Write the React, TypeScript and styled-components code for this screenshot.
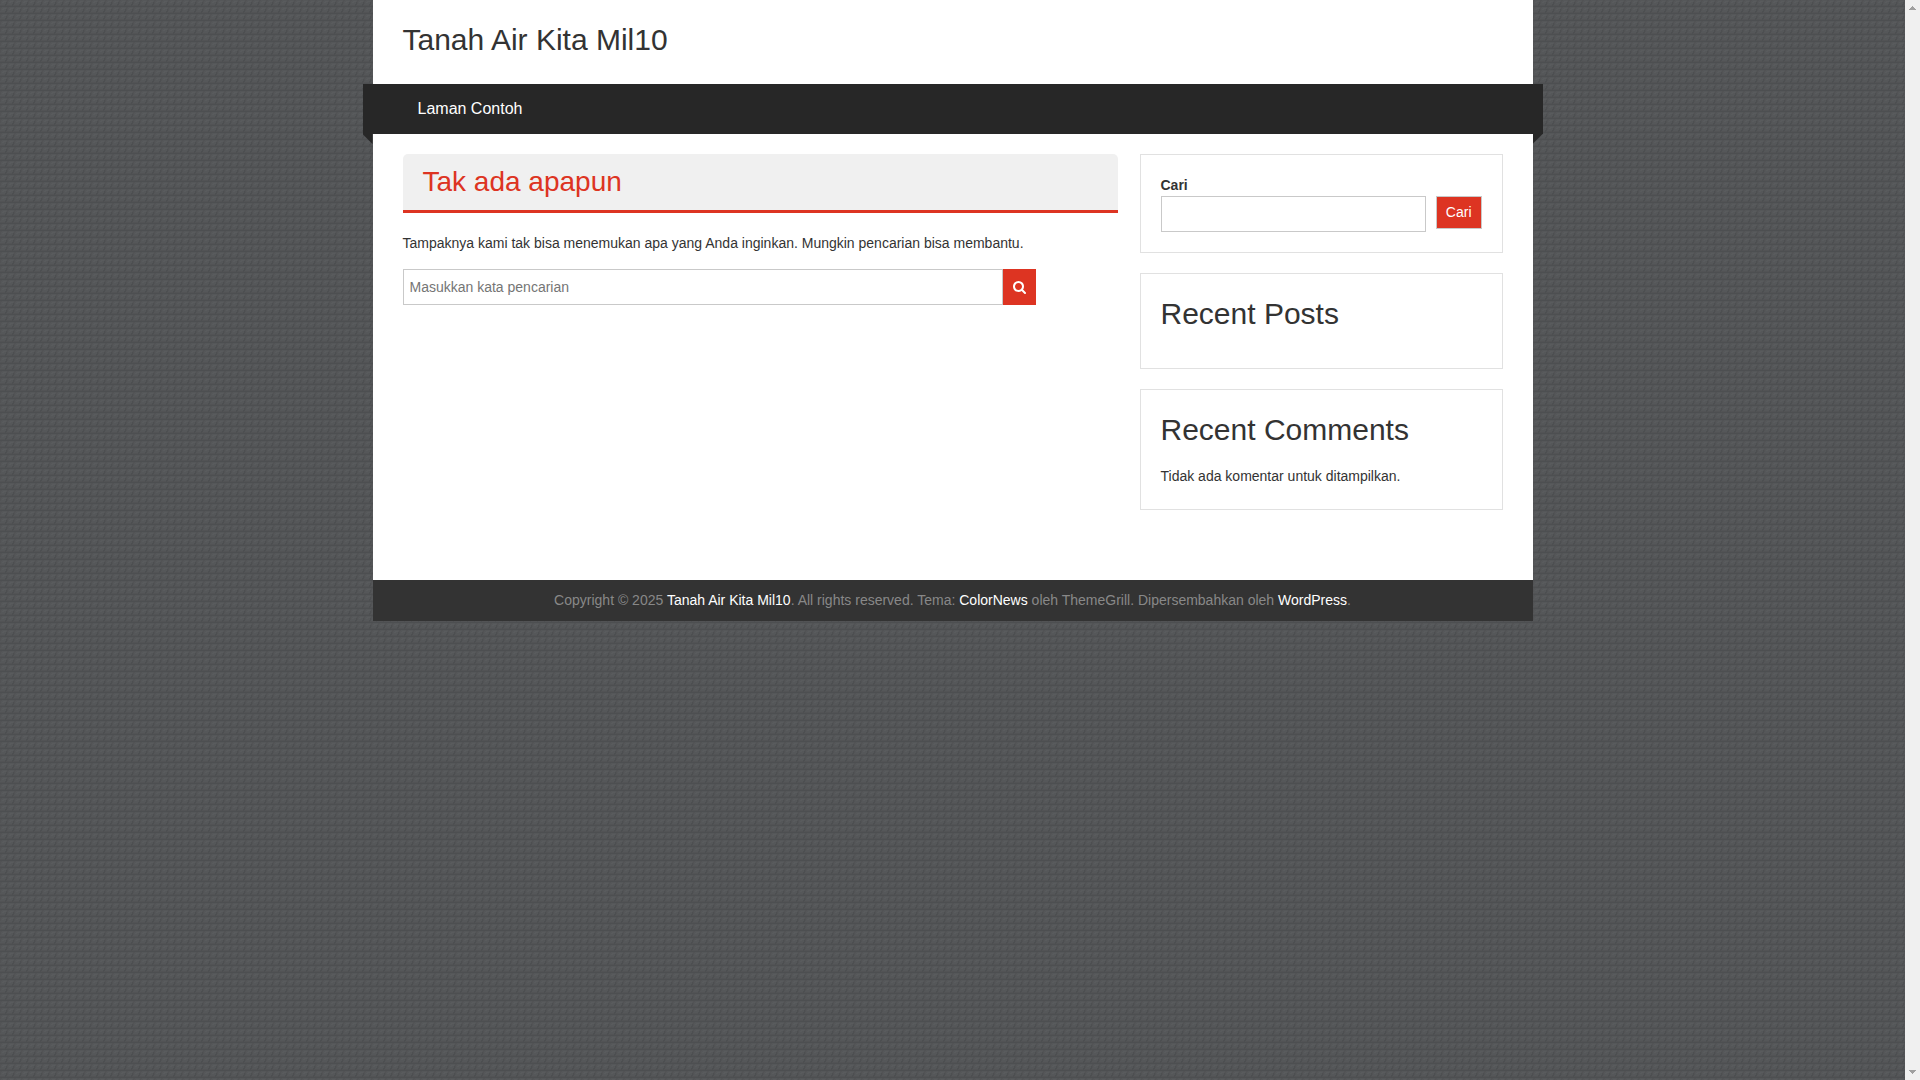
import React from "react";
import styled, { createGlobalStyle } from "styled-components";

const Global = createGlobalStyle`
  *, *::before, *::after { box-sizing: border-box; }
  html { scrollbar-width: none; }
  body {
    margin: 0;
    background-color: #545658;
    background-image: url("data:image/svg+xml,%3Csvg xmlns='http://www.w3.org/2000/svg' width='7' height='7' shape-rendering='crispEdges'%3E%3Crect width='7' height='7' fill='%23555759'/%3E%3Cpath d='M0 0h2v1H0zM0 1h1v3H0zM0 5h7v1H0z' fill='%23525355'/%3E%3Cpath d='M0 6h7v1H0zM5 4h1v2H5zM6 2h1v3H6z' fill='%234d4f51'/%3E%3Cpath d='M3 1h3v1H3zM2 2h2v1H2z' fill='%23595b5d'/%3E%3C/svg%3E");
    color: #333;
    font: 14px/21px "Liberation Sans", Arial, sans-serif;
  }
`;

const Page = styled.div`
  display: grid;
  grid-template-columns: minmax(0, 1fr) 15px;
  min-height: 100vh;
`;
const ScrollTrack = styled.div`
  position: sticky;
  top: 0;
  height: 100vh;
  padding: 6px 0;
  display: flex;
  flex-direction: column;
  justify-content: space-between;
  align-items: center;
  background: #f0f0f0;
`;
const Site = styled.div`
  width: 100%;
  max-width: 1160px;
  margin: 0 auto;
  align-self: start;
  background: #fff;
`;
const Header = styled.header`
  padding: 20px 30px 24px;
`;
const SiteTitle = styled.h1`
  margin: 0;
  font-size: 30px;
  line-height: 40px;
  font-weight: 400;
`;
const Link = styled.a`
  color: ${(p: { $color?: string }) => p.$color || "inherit"};
  text-decoration: none;
`;
const Nav = styled.nav`
  position: relative;
  display: flex;
  margin: 0 -10px;
  padding: 0 40px;
  background: #272727;
  &::before, &::after {
    content: "";
    position: absolute;
    top: 100%;
    width: 10px;
    height: 10px;
    background: #272727;
  }
  &::before { left: 0; clip-path: polygon(0 0, 100% 0, 100% 100%); }
  &::after { right: 0; clip-path: polygon(0 0, 100% 0, 0 100%); }
`;
const NavLink = styled(Link)`
  padding: 0 15px;
  font-size: 16px;
  line-height: 50px;
`;
const Content = styled.div`
  display: flex;
  justify-content: space-between;
  align-items: flex-start;
  padding: 20px 30px 50px;
`;
const Main = styled.main`
  width: 65%;
`;
const PageTitle = styled.h2`
  margin: 0 0 20px;
  padding: 8px 20px;
  border-bottom: 3px solid #dd3422;
  border-radius: 5px 5px 0 0;
  background: #f0f0f0;
  color: #dd3422;
  font-size: 28px;
  line-height: 40px;
  font-weight: 400;
`;
const Text = styled.p`
  margin: 0;
`;
const SearchForm = styled.form`
  display: flex;
  margin-top: 15px;
`;
const Field = styled.input`
  height: 36px;
  min-width: 0;
  padding: 0 6px;
  border: 1px solid #c9c9c9;
  border-radius: 0;
  background: #fff;
  color: #333;
  font: inherit;
  outline: 0;
  &::placeholder { color: #757575; opacity: 1; }
`;
const MainField = styled(Field)`
  width: 600px;
`;
const IconButton = styled.button`
  display: grid;
  place-items: center;
  width: 33px;
  height: 36px;
  padding: 0;
  border: 0;
  background: #dd3422;
  color: #fff;
`;
const Sidebar = styled.aside`
  width: 33%;
  display: grid;
  gap: 20px;
  padding-bottom: 20px;
`;
const Widget = styled.section`
  padding: 20px;
  border: 1px solid #e1e1e1;
`;
const WidgetForm = styled.form`
  display: grid;
  grid-template-columns: minmax(0, 1fr) auto;
  column-gap: 10px;
  align-items: start;
`;
const Label = styled.label`
  grid-column: 1 / -1;
  font-weight: 700;
`;
const TextButton = styled.button`
  height: 33px;
  padding: 0 9px;
  border: 1px solid #c9c9c9;
  background: #dd3422;
  color: #fff;
  font: inherit;
`;
const WidgetTitle = styled.h2`
  margin: 0 0 14px;
  font-size: 30px;
  line-height: 40px;
  font-weight: 400;
`;
const WidgetText = styled(Text)`
  line-height: 25px;
`;
const Footer = styled.footer`
  padding: 10px 30px;
  background: #333;
  color: #888;
  text-align: center;
`;

const Arrow = ({ down }: { down?: boolean }) => (
  <svg width="7" height="4" viewBox="0 0 7 4" shapeRendering="crispEdges" aria-hidden="true">
    <path
      d={down ? "M0 0h7v1H6v1H5v1H4v1H3V3H2V2H1V1H0z" : "M3 0h1v1h1v1h1v1h1v1H0V3h1V2h1V1h1z"}
      fill="#a0a0a0"
    />
  </svg>
);

const SearchIcon = () => (
  <svg width="13" height="13" viewBox="0 0 1664 1664" fill="currentColor" aria-hidden="true">
    <path d="M1152 704q0-185-131.500-316.500T704 256 387.500 387.500 256 704t131.500 316.500T704 1152t316.500-131.500T1152 704zm512 832q0 52-38 90t-90 38q-54 0-90-38l-343-342q-179 124-399 124-143 0-273.500-55.500t-225-150-150-225T0 704t55.500-273.500 150-225 225-150T704 0t273.500 55.500 225 150 150 225T1408 704q0 220-124 399l343 343q37 37 37 90z" />
  </svg>
);

const stay = (e: React.FormEvent) => e.preventDefault();

export default function App() {
  return (
    <>
      <Global />
      <Page>
        <Site>
          <Header>
            <SiteTitle>
              <Link href="#">Tanah Air Kita Mil10</Link>
            </SiteTitle>
          </Header>
          <Nav>
            <NavLink href="#" $color="#fff">Laman Contoh</NavLink>
          </Nav>
          <Content>
            <Main>
              <PageTitle>Tak ada apapun</PageTitle>
              <Text>
                Tampaknya kami tak bisa menemukan apa yang Anda inginkan. Mungkin pencarian bisa membantu.
              </Text>
              <SearchForm onSubmit={stay}>
                <MainField type="text" placeholder="Masukkan kata pencarian" aria-label="Masukkan kata pencarian" />
                <IconButton type="submit" aria-label="Cari">
                  <SearchIcon />
                </IconButton>
              </SearchForm>
            </Main>
            <Sidebar>
              <Widget>
                <WidgetForm onSubmit={stay}>
                  <Label htmlFor="widget-search">Cari</Label>
                  <Field id="widget-search" type="search" />
                  <TextButton type="submit">Cari</TextButton>
                </WidgetForm>
              </Widget>
              <Widget>
                <WidgetTitle>Recent Posts</WidgetTitle>
              </Widget>
              <Widget>
                <WidgetTitle>Recent Comments</WidgetTitle>
                <WidgetText>Tidak ada komentar untuk ditampilkan.</WidgetText>
              </Widget>
            </Sidebar>
          </Content>
          <Footer>
            Copyright © 2025 <Link href="#" $color="#fff">Tanah Air Kita Mil10</Link>. All rights reserved. Tema:{" "}
            <Link href="#" $color="#fff">ColorNews</Link> oleh ThemeGrill. Dipersembahkan oleh{" "}
            <Link href="#" $color="#fff">WordPress</Link>.
          </Footer>
        </Site>
        <ScrollTrack>
          <Arrow />
          <Arrow down />
        </ScrollTrack>
      </Page>
    </>
  );
}
